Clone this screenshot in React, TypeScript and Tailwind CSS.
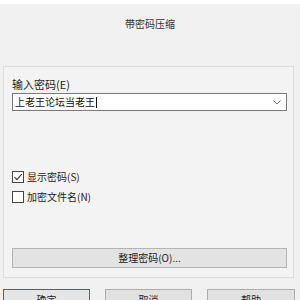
import React from 'react';

const font = { fontFamily: '"Noto Sans CJK SC", "Microsoft YaHei", sans-serif' };

function CheckBox({ checked, label }: { checked?: boolean; label: string }) {
    return (
        <div className="flex items-center h-[18px]">
            <div className="w-[12px] h-[12px] border border-[#444] bg-white flex items-center justify-center">
                {checked && (
                    <svg width="10" height="10" viewBox="0 0 10 10">
                        <path d="M1.5 5.2 L4 7.7 L8.7 2.2" fill="none" stroke="#333" strokeWidth="1.1" />
                    </svg>
                )}
            </div>
            <span className="ml-[3px] text-[10px] text-[#222] leading-none">{label}</span>
        </div>
    );
}

export default function App() {
    return (
        <div className="w-[300px] h-[300px] overflow-hidden bg-[#f0f0f0] flex flex-col" style={font}>
            <div className="h-[4px] bg-white shrink-0"></div>

            {/* title */}
            <div className="h-[62px] shrink-0 flex justify-center pt-[13px]">
                <span className="text-[10px] text-[#333] leading-[14px]">带密码压缩</span>
            </div>

            {/* group box */}
            <div className="ml-[3px] mr-[6px] h-[212px] shrink-0 border border-[#dcdcdc] bg-[#f3f3f3] flex flex-col px-[8px]">
                <div className="h-[26px] flex items-end pb-[3px]">
                    <span className="text-[11px] text-[#222] leading-none">输入密码(E)</span>
                </div>
                <div className="h-[18px] mr-[-2px] border border-[#7a7a7a] bg-white flex items-center justify-between pl-[2px] pr-[5px]">
                    <span className="text-[10px] text-[#111] leading-none flex items-center">
                        上老王论坛当老王<span className="w-px h-[11px] bg-[#111] ml-[1px]"></span>
                    </span>
                    <svg width="8" height="5" viewBox="0 0 8 5">
                        <path d="M0.5 0.5 L4 4 L7.5 0.5" fill="none" stroke="#777" strokeWidth="1" />
                    </svg>
                </div>
                <div className="mt-[57px] flex flex-col gap-[2px]">
                    <CheckBox checked label="显示密码(S)" />
                    <CheckBox label="加密文件名(N)" />
                </div>
                <div className="mt-[42px] mr-[-2px] h-[20px] border border-[#b4b4b4] bg-[#e3e3e3] flex items-center justify-center">
                    <span className="text-[10px] text-[#222] leading-none">整理密码(O)...</span>
                </div>
            </div>

            {/* bottom buttons */}
            <div className="mt-[11px] flex pl-[3px] gap-[15px]">
                <div className="w-[87px] h-[22px] shrink-0 border border-[#0078d7] bg-[#e5e5e5] flex justify-center pt-[5px]">
                    <span className="text-[10px] text-[#222] leading-none">确定</span>
                </div>
                <div className="w-[87px] h-[22px] shrink-0 border border-[#adadad] bg-[#e1e1e1] flex justify-center pt-[5px]">
                    <span className="text-[10px] text-[#222] leading-none">取消</span>
                </div>
                <div className="w-[88px] h-[22px] shrink-0 border border-[#adadad] bg-[#e1e1e1] flex justify-center pt-[5px]">
                    <span className="text-[10px] text-[#222] leading-none">帮助</span>
                </div>
            </div>
        </div>
    );
}
